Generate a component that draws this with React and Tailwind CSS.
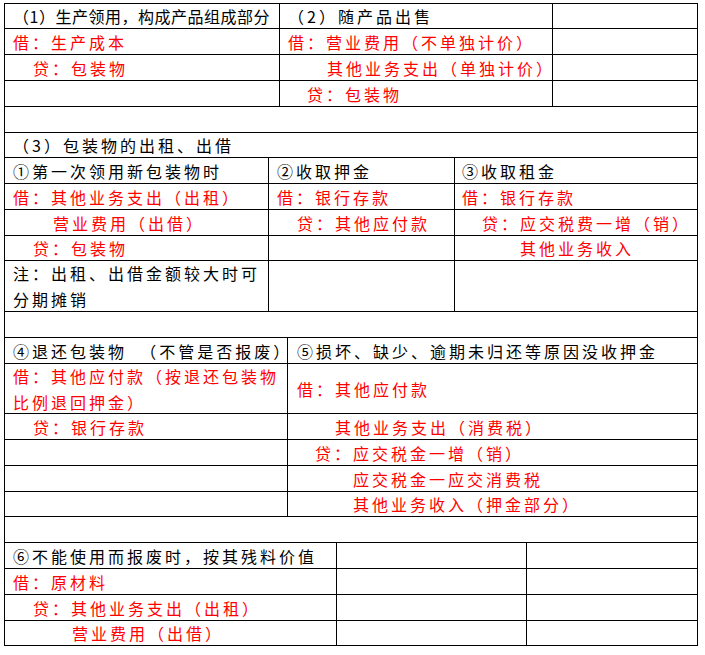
import React from 'react';

const RED = 'text-[#ff0000]';
const BLK = 'text-black';

// each section: rows of { h, cells: [{ w, pl, c, t }] }
const sections = [
  [
    { h: 'h-[25px]', cells: [
      { w: 'w-[275px]', pl: 'pl-[8px]', c: BLK, t: '（1）生产领用，构成产品组成部分', tight: true },
      { w: 'w-[273px]', pl: 'pl-[8px]', c: BLK, t: '（2）随产品出售' },
      { w: 'w-[145px]', pl: 'pl-[8px]', c: BLK, t: '' },
    ] },
    { h: 'h-[26px]', cells: [
      { w: 'w-[275px]', pl: 'pl-[8px]', c: RED, t: '借：生产成本' },
      { w: 'w-[273px]', pl: 'pl-[8px]', c: RED, t: '借：营业费用（不单独计价）' },
      { w: 'w-[145px]', pl: 'pl-[8px]', c: BLK, t: '' },
    ] },
    { h: 'h-[26px]', cells: [
      { w: 'w-[275px]', pl: 'pl-[28px]', c: RED, t: '贷：包装物' },
      { w: 'w-[273px]', pl: 'pl-[47px]', c: RED, t: '其他业务支出（单独计价）' },
      { w: 'w-[145px]', pl: 'pl-[8px]', c: BLK, t: '' },
    ] },
    { h: 'h-[26px]', cells: [
      { w: 'w-[275px]', pl: 'pl-[8px]', c: BLK, t: '' },
      { w: 'w-[273px]', pl: 'pl-[27px]', c: RED, t: '贷：包装物' },
      { w: 'w-[145px]', pl: 'pl-[8px]', c: BLK, t: '' },
    ] },
    { h: 'h-[26px]', cells: [{ w: 'w-[693px]', pl: 'pl-[8px]', c: BLK, t: '' }] },
  ],
  [
    { h: 'h-[25px]', cells: [{ w: 'w-[693px]', pl: 'pl-[8px]', c: BLK, t: '（3）包装物的出租、出借' }] },
    { h: 'h-[26px]', cells: [
      { w: 'w-[264px]', pl: 'pl-[8px]', c: BLK, t: '①第一次领用新包装物时' },
      { w: 'w-[186px]', pl: 'pl-[8px]', c: BLK, t: '②收取押金' },
      { w: 'w-[243px]', pl: 'pl-[7px]', c: BLK, t: '③收取租金' },
    ] },
    { h: 'h-[26px]', cells: [
      { w: 'w-[264px]', pl: 'pl-[8px]', c: RED, t: '借：其他业务支出（出租）' },
      { w: 'w-[186px]', pl: 'pl-[8px]', c: RED, t: '借：银行存款' },
      { w: 'w-[243px]', pl: 'pl-[7px]', c: RED, t: '借：银行存款' },
    ] },
    { h: 'h-[26px]', cells: [
      { w: 'w-[264px]', pl: 'pl-[48px]', c: RED, t: '营业费用（出借）' },
      { w: 'w-[186px]', pl: 'pl-[28px]', c: RED, t: '贷：其他应付款' },
      { w: 'w-[243px]', pl: 'pl-[27px]', c: RED, t: '贷：应交税费一增（销）' },
    ] },
    { h: 'h-[25px]', cells: [
      { w: 'w-[264px]', pl: 'pl-[28px]', c: RED, t: '贷：包装物' },
      { w: 'w-[186px]', pl: 'pl-[8px]', c: BLK, t: '' },
      { w: 'w-[243px]', pl: 'pl-[65px]', c: RED, t: '其他业务收入' },
    ] },
    { h: 'h-[51px]', cells: [
      { w: 'w-[264px]', pl: 'pl-[8px]', c: BLK, t: ['注：出租、出借金额较大时可', '分期摊销'] },
      { w: 'w-[186px]', pl: 'pl-[8px]', c: BLK, t: '' },
      { w: 'w-[243px]', pl: 'pl-[7px]', c: BLK, t: '' },
    ] },
    { h: 'h-[26px]', cells: [{ w: 'w-[693px]', pl: 'pl-[8px]', c: BLK, t: '' }] },
  ],
  [
    { h: 'h-[26px]', cells: [
      { w: 'w-[283px]', pl: 'pl-[8px]', c: BLK, t: '④退还包装物\u00a0\u00a0（不管是否报废）' },
      { w: 'w-[410px]', pl: 'pl-[9px]', c: BLK, t: '⑤损坏、缺少、逾期未归还等原因没收押金' },
    ] },
    { h: 'h-[50px]', cells: [
      { w: 'w-[283px]', pl: 'pl-[8px]', c: RED, t: ['借：其他应付款（按退还包装物', '比例退回押金）'] },
      { w: 'w-[410px]', pl: 'pl-[9px]', c: RED, t: '借：其他应付款' },
    ] },
    { h: 'h-[26px]', cells: [
      { w: 'w-[283px]', pl: 'pl-[28px]', c: RED, t: '贷：银行存款' },
      { w: 'w-[410px]', pl: 'pl-[47px]', c: RED, t: '其他业务支出（消费税）' },
    ] },
    { h: 'h-[26px]', cells: [
      { w: 'w-[283px]', pl: 'pl-[8px]', c: BLK, t: '' },
      { w: 'w-[410px]', pl: 'pl-[27px]', c: RED, t: '贷：应交税金一增（销）' },
    ] },
    { h: 'h-[26px]', cells: [
      { w: 'w-[283px]', pl: 'pl-[8px]', c: BLK, t: '' },
      { w: 'w-[410px]', pl: 'pl-[65px]', c: RED, t: '应交税金一应交消费税' },
    ] },
    { h: 'h-[25px]', cells: [
      { w: 'w-[283px]', pl: 'pl-[8px]', c: BLK, t: '' },
      { w: 'w-[410px]', pl: 'pl-[65px]', c: RED, t: '其他业务收入（押金部分）' },
    ] },
    { h: 'h-[26px]', cells: [{ w: 'w-[693px]', pl: 'pl-[8px]', c: BLK, t: '' }] },
  ],
  [
    { h: 'h-[26px]', cells: [
      { w: 'w-[332px]', pl: 'pl-[8px]', c: BLK, t: '⑥不能使用而报废时，按其残料价值' },
      { w: 'w-[190px]', pl: 'pl-[8px]', c: BLK, t: '' },
      { w: 'w-[171px]', pl: 'pl-[8px]', c: BLK, t: '' },
    ] },
    { h: 'h-[26px]', cells: [
      { w: 'w-[332px]', pl: 'pl-[8px]', c: RED, t: '借：原材料' },
      { w: 'w-[190px]', pl: 'pl-[8px]', c: BLK, t: '' },
      { w: 'w-[171px]', pl: 'pl-[8px]', c: BLK, t: '' },
    ] },
    { h: 'h-[26px]', cells: [
      { w: 'w-[332px]', pl: 'pl-[28px]', c: RED, t: '贷：其他业务支出（出租）' },
      { w: 'w-[190px]', pl: 'pl-[8px]', c: BLK, t: '' },
      { w: 'w-[171px]', pl: 'pl-[8px]', c: BLK, t: '' },
    ] },
    { h: 'h-[25px]', cells: [
      { w: 'w-[332px]', pl: 'pl-[67px]', c: RED, t: '营业费用（出借）' },
      { w: 'w-[190px]', pl: 'pl-[8px]', c: BLK, t: '' },
      { w: 'w-[171px]', pl: 'pl-[8px]', c: BLK, t: '' },
    ] },
  ],
];

const Cell = ({ w, pl, c, t, tight }) => (
  <div
    className={`flex items-center shrink-0 border-r border-b border-black whitespace-nowrap ${w} ${pl} ${c} ${
      tight ? 'tracking-[0.5px]' : 'tracking-[3px]'
    }`}
  >
    {Array.isArray(t) ? (
      <div className="leading-[26px] -mr-[3px]">
        {t.map((line, i) => (
          <div key={i}>{line}</div>
        ))}
      </div>
    ) : t ? (
      <span className={tight ? '' : '-mr-[3px]'}>{t}</span>
    ) : null}
  </div>
);

export default function App() {
  return (
    <div className="min-h-[655px] w-[705px] bg-white pt-[3px] pl-[4px] font-['Noto_Sans_CJK_SC','Liberation_Sans',sans-serif] text-[16px] leading-none">
      <div className="w-[694px] border-t border-l border-black">
        {sections.flat().map((row, i) => (
          <div key={i} className={`flex ${row.h}`}>
            {row.cells.map((cell, j) => (
              <Cell key={j} {...cell} />
            ))}
          </div>
        ))}
      </div>
    </div>
  );
}
